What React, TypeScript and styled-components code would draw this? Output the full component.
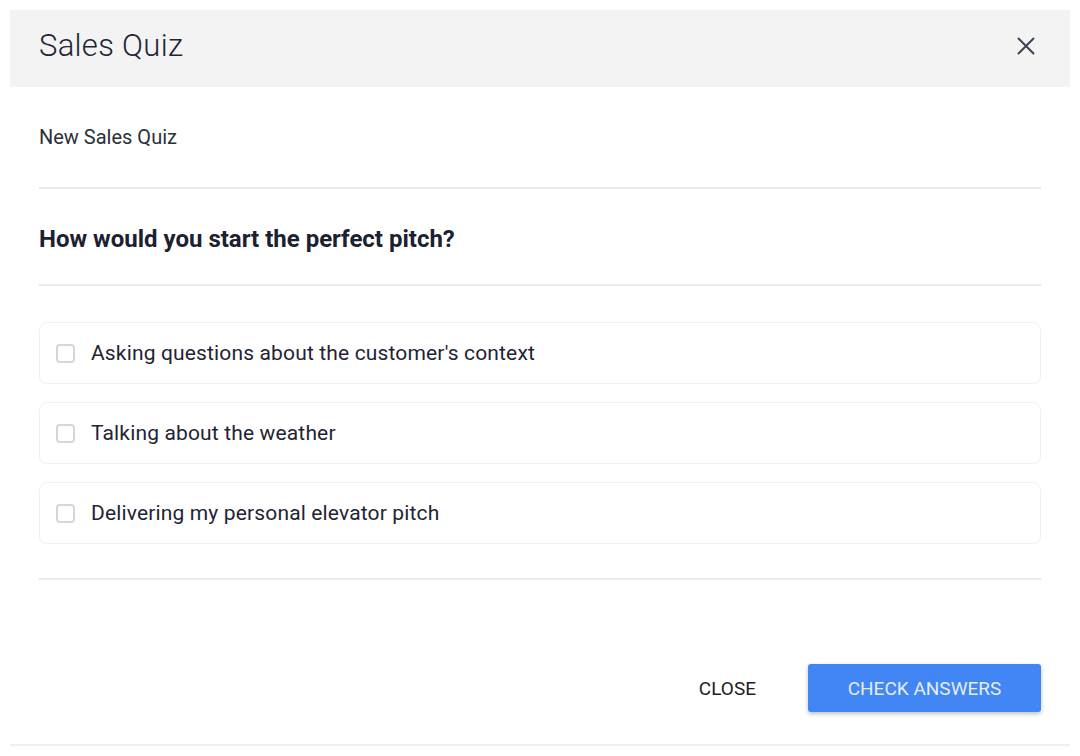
import React from "react";
import styled, { createGlobalStyle } from "styled-components";

const GlobalStyle = createGlobalStyle`
  html, body {
    margin: 0;
    padding: 0;
    background: #ffffff;
    font-family: Roboto, "Liberation Sans", sans-serif;
  }
`;

const Modal = styled.div`
  margin: 10px;
  width: 1060px;
  background: #fff;
  border-bottom: 2px solid #efefef;
`;

const Header = styled.div`
  display: flex;
  align-items: center;
  justify-content: space-between;
  height: 77px;
  box-sizing: border-box;
  padding: 0 35px 6px 29px;
  background: #f3f3f3;
`;

const Title = styled.h1`
  margin: 0;
  font-size: 31px;
  font-weight: 300;
  color: #1f2533;
  letter-spacing: 0.3px;
`;

const CloseIcon = styled.button`
  display: flex;
  align-items: center;
  justify-content: center;
  padding: 0;
  border: none;
  background: none;
  cursor: pointer;
  width: 18px;
  height: 18px;
`;

const Body = styled.div`
  padding: 0 29px;
`;

const Section = styled.div<{ $top: number; $bottom: number }>`
  padding: ${({ $top, $bottom }) => `${$top}px 0 ${$bottom}px`};
  border-bottom: 2px solid #ebebeb;
`;

const Subtitle = styled.div`
  font-size: 20px;
  line-height: 24px;
  color: #2b2f38;
`;

const Question = styled.h2`
  margin: 0;
  font-size: 24px;
  line-height: 28px;
  font-weight: 700;
  color: #1b2130;
`;

const OptionList = styled.div`
  display: flex;
  flex-direction: column;
  gap: 18px;
`;

const OptionCard = styled.label`
  display: flex;
  align-items: center;
  gap: 16px;
  height: 62px;
  box-sizing: border-box;
  padding: 0 16px;
  border: 1px solid #efefef;
  border-radius: 8px;
  cursor: pointer;
`;

const Box = styled.span`
  width: 19px;
  height: 19px;
  box-sizing: border-box;
  border: 2px solid #d6d6da;
  border-radius: 4px;
  background: #fff;
  flex-shrink: 0;
`;

const OptionText = styled.span`
  font-size: 21px;
  color: #1f2433;
  letter-spacing: 0.15px;
`;

const Footer = styled.div`
  display: flex;
  justify-content: flex-end;
  align-items: center;
  gap: 28px;
  padding: 84px 29px 32px;
`;

const TextButton = styled.button`
  border: none;
  background: none;
  font-family: inherit;
  font-size: 19px;
  color: #1e1e1e;
  text-transform: uppercase;
  padding: 0 24px;
  height: 48px;
  cursor: pointer;
`;

const PrimaryButton = styled.button`
  width: 233px;
  height: 48px;
  border: none;
  border-radius: 3px;
  background: #4285f4;
  color: #e3edfd;
  font-family: inherit;
  font-size: 19px;
  text-transform: uppercase;
  box-shadow: 0 2px 4px rgba(0, 0, 0, 0.25);
  cursor: pointer;
`;

const options = [
  "Asking questions about the customer's context",
  "Talking about the weather",
  "Delivering my personal elevator pitch",
];

export default function App() {
  return (
    <>
      <GlobalStyle />
      <Modal>
        <Header>
          <Title>Sales Quiz</Title>
          <CloseIcon aria-label="Close">
            <svg width="18" height="18" viewBox="0 0 18 18">
              <path
                d="M1.5 1.5 L16.5 16.5 M16.5 1.5 L1.5 16.5"
                stroke="#3c4452"
                strokeWidth="2"
                strokeLinecap="round"
              />
            </svg>
          </CloseIcon>
        </Header>
        <Body>
          <Section $top={38} $bottom={38}>
            <Subtitle>New Sales Quiz</Subtitle>
          </Section>
          <Section $top={36} $bottom={31}>
            <Question>How would you start the perfect pitch?</Question>
          </Section>
          <Section $top={36} $bottom={34}>
            <OptionList>
              {options.map((o) => (
                <OptionCard key={o}>
                  <Box />
                  <OptionText>{o}</OptionText>
                </OptionCard>
              ))}
            </OptionList>
          </Section>
        </Body>
        <Footer>
          <TextButton>Close</TextButton>
          <PrimaryButton>Check Answers</PrimaryButton>
        </Footer>
      </Modal>
    </>
  );
}
